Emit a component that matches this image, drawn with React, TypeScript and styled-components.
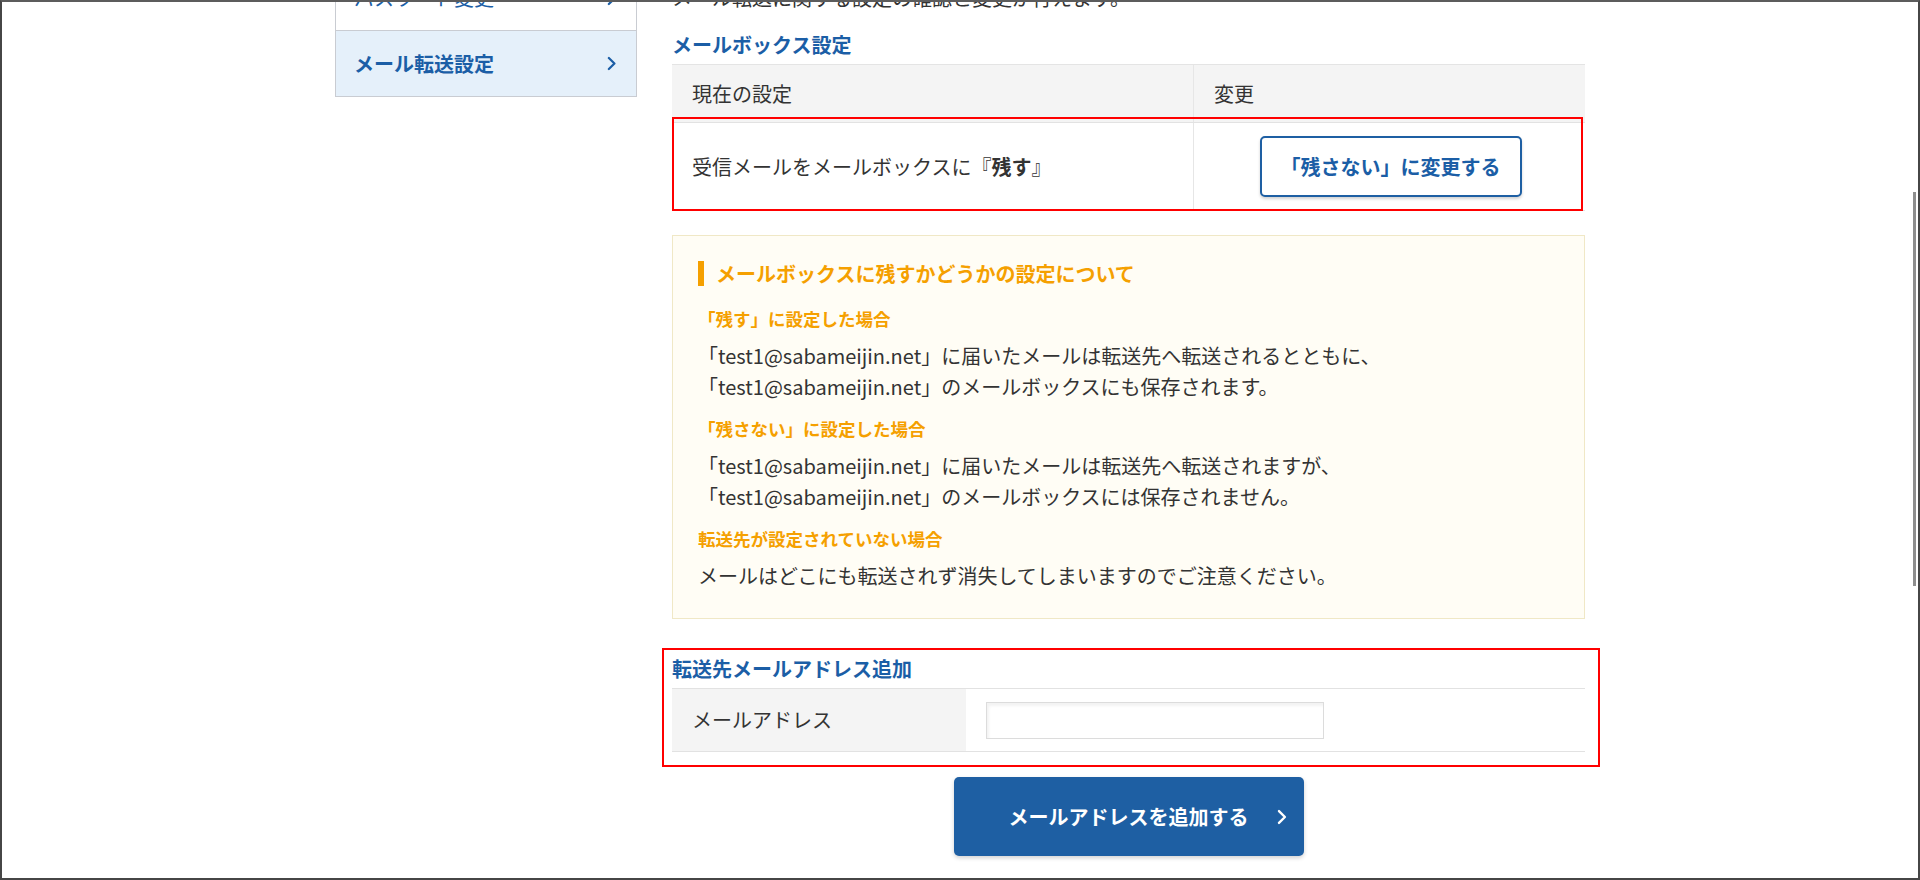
import React from 'react';
import styled, { createGlobalStyle } from 'styled-components';

const BLUE = '#1b5ea6';
const ORANGE = '#f5a000';
const TEXT = '#333333';

const GlobalStyle = createGlobalStyle`
  html, body {
    margin: 0;
    padding: 0;
    overflow: hidden;
    background: #ffffff;
  }
  body {
    font-family: "Noto Sans CJK JP", "Noto Sans", sans-serif;
    color: ${TEXT};
  }
  * {
    box-sizing: border-box;
  }
`;

const Chevron = ({ color, size = 15 }: { color: string; size?: number }) => (
  <svg width={size * 0.62} height={size} viewBox="0 0 10 16" fill="none">
    <polyline points="2,2 8,8 2,14" stroke={color} strokeWidth="2.4" strokeLinecap="round" strokeLinejoin="round" />
  </svg>
);

const App = () => {
  return (
    <>
      <GlobalStyle />
      <Frame>
        <Layout>
          <Sidebar>
            <SideItem>
              <span>パスワード変更</span>
              <Chevron color={BLUE} />
            </SideItem>
            <SideItem active>
              <span>メール転送設定</span>
              <Chevron color={BLUE} />
            </SideItem>
          </Sidebar>

          <Main>
            <Intro>メール転送に関する設定の確認と変更が行えます。</Intro>

            <SectionTitle>メールボックス設定</SectionTitle>
            <SettingTable>
              <HeadRow>
                <HeadCell>現在の設定</HeadCell>
                <HeadCell divider>変更</HeadCell>
              </HeadRow>
              <BodyRow>
                <BodyCell>
                  受信メールをメールボックスに『<b>残す</b>』
                </BodyCell>
                <BodyCell divider center>
                  <OutlineButton type="button">「残さない」に変更する</OutlineButton>
                </BodyCell>
              </BodyRow>
            </SettingTable>

            <InfoBox>
              <InfoTitle>メールボックスに残すかどうかの設定について</InfoTitle>
              <InfoSub>「残す」に設定した場合</InfoSub>
              <InfoText>
                「test1@sabameijin.net」に届いたメールは転送先へ転送されるとともに、
                <br />
                「test1@sabameijin.net」のメールボックスにも保存されます。
              </InfoText>
              <InfoSub>「残さない」に設定した場合</InfoSub>
              <InfoText>
                「test1@sabameijin.net」に届いたメールは転送先へ転送されますが、
                <br />
                「test1@sabameijin.net」のメールボックスには保存されません。
              </InfoText>
              <InfoSub>転送先が設定されていない場合</InfoSub>
              <InfoText>メールはどこにも転送されず消失してしまいますのでご注意ください。</InfoText>
            </InfoBox>

            <AddSection>
              <SectionTitle flush>転送先メールアドレス追加</SectionTitle>
              <FormTable>
                <FormLabel>メールアドレス</FormLabel>
                <FormField>
                  <TextInput type="text" />
                </FormField>
              </FormTable>
            </AddSection>

            <ButtonRow>
              <PrimaryButton type="button">
                メールアドレスを追加する
                <ButtonArrow>
                  <Chevron color="#ffffff" size={16} />
                </ButtonArrow>
              </PrimaryButton>
            </ButtonRow>
          </Main>
        </Layout>
        <ScrollThumb />
      </Frame>
    </>
  );
};

export default App;

const Frame = styled.div`
  position: relative;
  width: 1920px;
  height: 880px;
  overflow: hidden;
  border: 2px solid #464646;
  border-top-color: #5c5c5c;
  background: #ffffff;
`;

const ScrollThumb = styled.div`
  position: absolute;
  top: 190px;
  right: 2px;
  width: 3px;
  height: 394px;
  background: #8e8e8e;
`;

const Layout = styled.div`
  display: flex;
  align-items: flex-start;
  gap: 35px;
  width: 1250px;
  margin: -37px auto 0;
`;

const Sidebar = styled.nav`
  width: 302px;
  flex-shrink: 0;
  border: 1px solid #c9ccd2;
`;

interface SideItemProps {
  active?: boolean;
}

const SideItem = styled.div<SideItemProps>`
  display: flex;
  align-items: center;
  justify-content: space-between;
  height: 65px;
  padding: 0 20px 0 18px;
  border-bottom: 1px solid #c9ccd2;
  background: ${(p) => (p.active ? '#e5f0fa' : '#ffffff')};
  color: ${BLUE};
  font-size: 20px;
  font-weight: ${(p) => (p.active ? 700 : 400)};
  line-height: 24px;

  &:last-child {
    border-bottom: none;
  }
`;

const Main = styled.main`
  width: 913px;
  display: flex;
  flex-direction: column;
`;

const Intro = styled.p`
  margin: 17px 0 0;
  font-size: 20px;
  line-height: 31px;
  color: ${TEXT};
`;

interface SectionTitleProps {
  flush?: boolean;
}

const SectionTitle = styled.h2<SectionTitleProps>`
  margin: ${(p) => (p.flush ? '0' : '20px 0 0')};
  font-size: 20px;
  line-height: 24px;
  font-weight: 700;
  color: ${BLUE};
`;

const SettingTable = styled.div`
  margin-top: 7px;
  border-top: 1px solid #e4e4e4;
`;

const HeadRow = styled.div`
  display: grid;
  grid-template-columns: 521px 1fr;
  height: 58px;
  background: #f4f4f4;
  border-bottom: 1px solid #e2e2e2;
`;

interface CellProps {
  divider?: boolean;
  center?: boolean;
}

const HeadCell = styled.div<CellProps>`
  display: flex;
  align-items: center;
  padding-left: 20px;
  font-size: 20px;
  line-height: 24px;
  border-left: ${(p) => (p.divider ? '1px solid #e6e6e6' : 'none')};
`;

const BodyRow = styled.div`
  position: relative;
  display: grid;
  grid-template-columns: 521px 1fr;
  height: 88px;
  border-bottom: 1px solid #e2e2e2;

  &::after {
    content: '';
    position: absolute;
    top: -6px;
    left: 0;
    right: 2px;
    bottom: -1px;
    border: 2px solid #ff0000;
    pointer-events: none;
  }
`;

const BodyCell = styled.div<CellProps>`
  display: flex;
  align-items: center;
  justify-content: ${(p) => (p.center ? 'center' : 'flex-start')};
  padding-left: ${(p) => (p.center ? '0' : '20px')};
  font-size: 20px;
  line-height: 24px;
  border-left: ${(p) => (p.divider ? '1px solid #e6e6e6' : 'none')};

  b {
    font-weight: 700;
  }
`;

const OutlineButton = styled.button`
  width: 262px;
  height: 61px;
  margin-left: 2px;
  border: 2px solid #1e5fa3;
  border-radius: 5px;
  background: #ffffff;
  box-shadow: 0 2px 3px rgba(0, 0, 0, 0.18);
  color: ${BLUE};
  font-family: inherit;
  font-size: 20px;
  font-weight: 700;
  cursor: pointer;
`;

const InfoBox = styled.section`
  margin-top: 24px;
  padding: 25px 24px 27px 25px;
  background: #fffdf5;
  border: 1px solid #f0e8c6;
`;

const InfoTitle = styled.h3`
  margin: 0;
  padding-left: 12px;
  border-left: 6px solid ${ORANGE};
  font-size: 20px;
  line-height: 25px;
  font-weight: 700;
  color: ${ORANGE};
`;

const InfoSub = styled.h4`
  margin: 14px 0 0;
  font-size: 17.5px;
  line-height: 26px;
  font-weight: 700;
  color: ${ORANGE};

  ${InfoTitle} + & {
    margin-top: 20px;
  }
`;

const InfoText = styled.p`
  margin: 8px 0 0;
  font-size: 20px;
  line-height: 31px;
  color: ${TEXT};
`;

const AddSection = styled.section`
  position: relative;
  margin-top: 38px;

  &::after {
    content: '';
    position: absolute;
    top: -9px;
    left: -10px;
    right: -15px;
    bottom: -15px;
    border: 2px solid #ff0000;
    pointer-events: none;
  }
`;

const FormTable = styled.div`
  display: grid;
  grid-template-columns: 294px 1fr;
  height: 64px;
  margin-top: 7px;
  border-top: 1px solid #e2e2e2;
  border-bottom: 1px solid #e2e2e2;
`;

const FormLabel = styled.div`
  display: flex;
  align-items: center;
  padding-left: 20px;
  background: #f4f4f4;
  font-size: 20px;
  line-height: 24px;
`;

const FormField = styled.div`
  display: flex;
  align-items: center;
  padding-left: 20px;
`;

const TextInput = styled.input`
  width: 338px;
  height: 37px;
  border: 1px solid #dcdcdc;
  border-radius: 0;
  box-shadow: inset 2px 3px 3px rgba(0, 0, 0, 0.05);
  font-family: inherit;
  font-size: 18px;
  outline: none;
`;

const ButtonRow = styled.div`
  display: flex;
  justify-content: center;
  margin-top: 25px;
`;

const PrimaryButton = styled.button`
  position: relative;
  width: 350px;
  height: 79px;
  border: none;
  border-radius: 5px;
  background: #1e5fa3;
  box-shadow: 0 2px 4px rgba(0, 0, 0, 0.18);
  color: #ffffff;
  font-family: inherit;
  font-size: 20px;
  font-weight: 700;
  cursor: pointer;
`;

const ButtonArrow = styled.span`
  position: absolute;
  right: 17px;
  top: 50%;
  display: flex;
  transform: translateY(-50%);
`;
